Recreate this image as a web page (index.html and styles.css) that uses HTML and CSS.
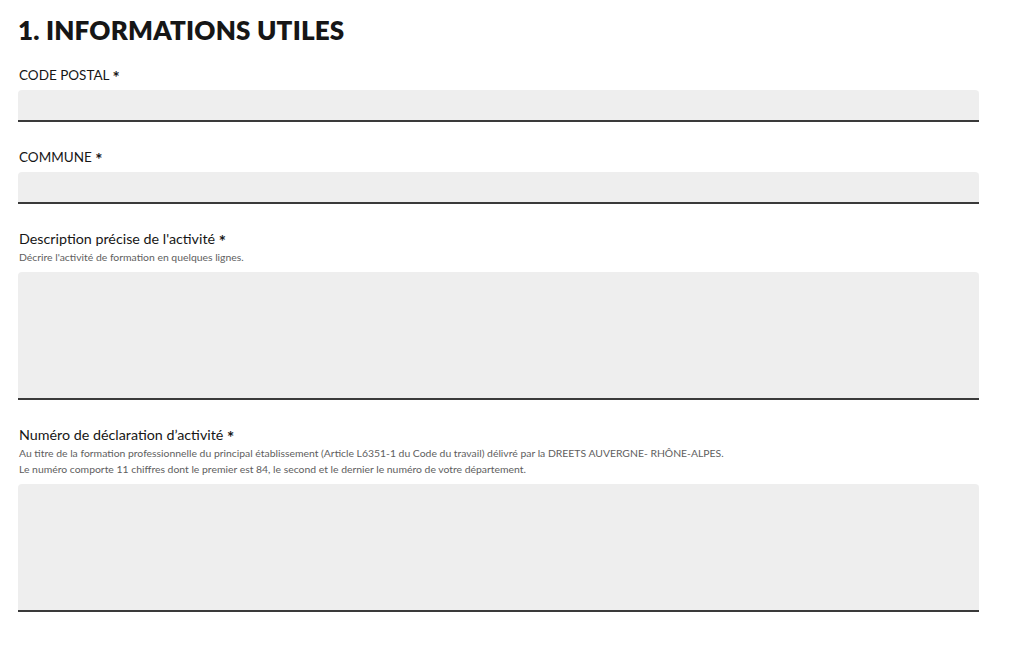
FILE: index.html
```html
<!DOCTYPE html>
<html lang="fr">
<head>
    <meta charset="UTF-8">
    <title>Informations utiles</title>
    <meta name="viewport" content="width=device-width, initial-scale=1">
    <link rel="stylesheet" href="styles.css">
</head>
<body>
<div class="container">
    <h2 class="section-title">1. INFORMATIONS UTILES</h2>

    <div class="field">
        <label class="field__label field__label--caps" for="code-postal">CODE POSTAL <span class="required">*</span></label>
        <input type="text" class="field__input" id="code-postal">
    </div>

    <div class="field">
        <label class="field__label field__label--caps" for="commune">COMMUNE <span class="required">*</span></label>
        <input type="text" class="field__input" id="commune">
    </div>

    <div class="field">
        <label class="field__label" for="description">Description précise de l'activité <span class="required">*</span></label>
        <span class="field__hint">Décrire l'activité de formation en quelques lignes.</span>
        <textarea class="field__input field__input--area" id="description"></textarea>
    </div>

    <div class="field">
        <label class="field__label" for="declaration">Numéro de déclaration d’activité <span class="required">*</span></label>
        <span class="field__hint">Au titre de la formation professionnelle du principal établissement (Article L6351-1 du Code du travail) délivré par la DREETS AUVERGNE- RHÔNE-ALPES.<br>Le numéro comporte 11 chiffres dont le premier est 84, le second et le dernier le numéro de votre département.</span>
        <textarea class="field__input field__input--area" id="declaration"></textarea>
    </div>
</div>
</body>
</html>
```

FILE: styles.css
```css
* {
    margin: 0;
    box-sizing: border-box;
}

body {
    background: #fff;
    color: #161616;
    font-family: Lato, "Noto Sans", sans-serif;
}

.container {
    padding: 12px 40px 0 18px;
    display: flex;
    flex-direction: column;
    gap: 25px;
}

.section-title {
    font-size: 26px;
    line-height: 36px;
    font-weight: 800;
    letter-spacing: 0.2px;
    margin-bottom: -8px;
}

/*fields*/

.field {
    display: flex;
    flex-direction: column;
}

.field__label {
    font-size: 14.3px;
    line-height: 20px;
    margin-left: 1px;
    margin-bottom: 5px;
}

.field__label--caps {
    font-size: 13.5px;
}

.required {
    font-size: 17px;
    font-weight: 700;
    vertical-align: -4px;
    line-height: 0;
}

.field__hint {
    font-size: 10.4px;
    line-height: 16px;
    color: #5e5e5e;
    margin-left: 1px;
    margin-top: -5px;
    margin-bottom: 7px;
}

.field__input {
    display: block;
    width: 100%;
    height: 32px;
    border: none;
    border-radius: 4px 4px 0 0;
    background-color: #eee;
    box-shadow: inset 0 -2px 0 0 #3a3a3a;
    font-family: inherit;
    font-size: 15px;
    padding: 8px 16px;
    resize: none;
    outline: none;
}

.field__input--area {
    height: 128px;
}
```
